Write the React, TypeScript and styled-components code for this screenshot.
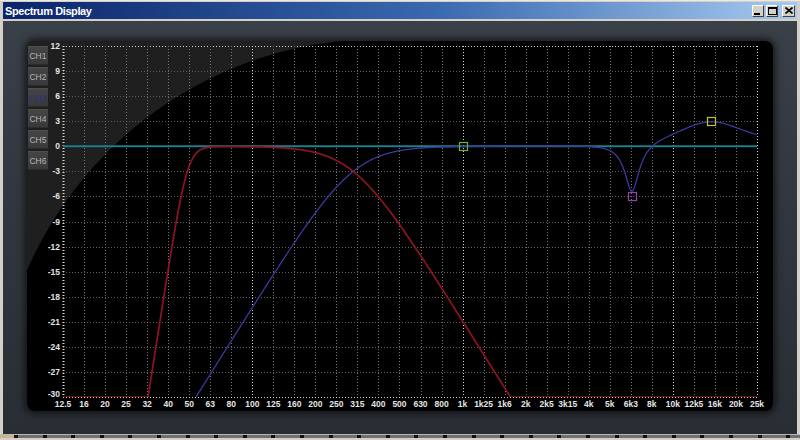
import React from 'react';
import styled, { createGlobalStyle } from 'styled-components';

const GlobalStyle = createGlobalStyle`
  html, body {
    margin: 0;
    padding: 0;
    background: #d4d0c8;
  }
  body {
    font-family: 'Liberation Sans', Arial, sans-serif;
  }
`;

// plot geometry, in page pixels (the svg viewBox uses page coordinates)
const LEFT = 63;
const RIGHT = 757;
const TOP = 45;
const BOTTOM = 396;
const PER_OCT = (RIGHT - LEFT) / 11;

const freqLabels = [
  '12.5', '16', '20', '25', '32', '40', '50', '63', '80', '100', '125', '160',
  '200', '250', '315', '400', '500', '630', '800', '1k', '1k25', '1k6', '2k',
  '2k5', '3k15', '4k', '5k', '6k3', '8k', '10k', '12k5', '16k', '20k', '25k',
];
const majorIdx = [0, 9, 19, 29, 33];
const dbLabels = [12, 9, 6, 3, 0, -3, -6, -9, -12, -15, -18, -21, -24, -27, -30];

const xOf = (i: number) => LEFT + (i * (RIGHT - LEFT)) / 33;
const yOf = (db: number) => TOP + ((12 - db) * (BOTTOM - TOP)) / 42;

const hp = (f: number, fc: number, n: number) =>
  -10 * Math.log10(1 + Math.pow(fc / f, 2 * n));
const lp = (f: number, fc: number, n: number) =>
  -10 * Math.log10(1 + Math.pow(f / fc, 2 * n));
const peak = (f: number, f0: number, gain: number, q: number) => {
  const A = Math.pow(10, gain / 40);
  const w = f / f0;
  const a = (1 - w * w) ** 2;
  return 10 * Math.log10((a + (w * A / q) ** 2) / (a + (w / (A * q)) ** 2));
};

const buildPath = (fn: (f: number) => number, clamp: boolean) => {
  const pts: string[] = [];
  for (let px = LEFT; px <= RIGHT; px += 0.5) {
    const f = 12.5 * Math.pow(2, (px - LEFT) / PER_OCT);
    const db = Math.max(fn(f), clamp ? -30 : -40);
    pts.push(`${px.toFixed(1)},${yOf(db).toFixed(2)}`);
  }
  return 'M' + pts.join(' L');
};

const redCurve = buildPath((f) => hp(f, 49, 8) + lp(f, 303, 2), true);
const blueCurve = buildPath(
  (f) => hp(f, 303, 2) + peak(f, 6485, -6, 5) + peak(f, 15400, 3, 1),
  false
);

const markers = [
  { x: 463, db: 0, color: '#74b236' },
  { x: 632, db: -6, color: '#9244b4' },
  { x: 711, db: 3, color: '#c8c22e' },
];

const channels = ['CH1', 'CH2', 'CH3', 'CH4', 'CH5', 'CH6'];

function CaptionIcon({ kind }: { kind: 'min' | 'max' | 'close' }) {
  if (kind === 'min')
    return (
      <svg width='8' height='8' viewBox='0 0 8 8'>
        <rect x='0' y='6' width='6' height='2' fill='#000' />
      </svg>
    );
  if (kind === 'max')
    return (
      <svg width='9' height='8' viewBox='0 0 9 8'>
        <rect x='0.5' y='0.5' width='8' height='7' fill='none' stroke='#000' />
        <rect x='0' y='0' width='9' height='2' fill='#000' />
      </svg>
    );
  return (
    <svg width='8' height='7' viewBox='0 0 8 7'>
      <path d='M0.5 0.5 L7.5 6.5 M7.5 0.5 L0.5 6.5' stroke='#000' strokeWidth='1.6' />
    </svg>
  );
}

function Chart() {
  return (
    <ChartSvg width={725} height={370} viewBox='48 40 725 370'>
      <defs>
        <clipPath id='plot'>
          <rect x={LEFT} y={TOP - 1} width={RIGHT - LEFT} height={BOTTOM - TOP + 1} />
        </clipPath>
      </defs>

      {/* horizontal grid */}
      {dbLabels.map((db, i) => {
        const y = Math.round(yOf(db)) + 0.5;
        const edge = i === 0 || i === dbLabels.length - 1;
        return (
          <line
            key={'h' + db}
            x1={LEFT}
            x2={RIGHT}
            y1={y}
            y2={y}
            stroke={edge ? '#cfcfcf' : '#5c5c5c'}
            strokeDasharray='1 2'
          />
        );
      })}

      {/* vertical grid */}
      {freqLabels.map((_, i) => {
        const x = Math.round(xOf(i)) + 0.5;
        const major = majorIdx.includes(i);
        return (
          <line
            key={'v' + i}
            x1={x}
            x2={x}
            y1={TOP}
            y2={BOTTOM}
            stroke={major ? '#d8d8d8' : '#767676'}
            strokeWidth={i === 0 ? 2 : 1}
            strokeDasharray='1 2'
          />
        );
      })}

      {/* 0 dB reference */}
      <line x1={LEFT} x2={RIGHT} y1={yOf(0)} y2={yOf(0)} stroke='#1f7c8c' strokeWidth={2} />

      <g clipPath='url(#plot)' fill='none'>
        <path d={blueCurve} stroke='#3a3a9c' strokeWidth={1.3} />
        <path d={redCurve} stroke='#8e1422' strokeWidth={1.7} />
      </g>

      <g fill='none' strokeWidth={1.2}>
        {markers.map((m) => (
          <rect
            key={m.x}
            x={m.x - 3.5}
            y={Math.round(yOf(m.db)) - 3.5}
            width={8}
            height={8}
            stroke={m.color}
          />
        ))}
      </g>

      {dbLabels.map((db, i) => (
        <AxisText
          key={'l' + db}
          x={60}
          y={i === dbLabels.length - 1 ? 396 : yOf(db) + 3}
          textAnchor='end'
        >
          {db}
        </AxisText>
      ))}
      {freqLabels.map((label, i) => (
        <AxisText key={'f' + label} x={xOf(i)} y={406} textAnchor='middle'>
          {label}
        </AxisText>
      ))}
    </ChartSvg>
  );
}

export default function App() {
  return (
    <>
      <GlobalStyle />
      <Window>
        <TitleBar>
          <Title>Spectrum Display</Title>
          <Captions>
            <CaptionButton>
              <CaptionIcon kind='min' />
            </CaptionButton>
            <CaptionButton>
              <CaptionIcon kind='max' />
            </CaptionButton>
            <CaptionButton $wide>
              <CaptionIcon kind='close' />
            </CaptionButton>
          </Captions>
        </TitleBar>
        <Client>
          <Panel>
            <ChannelList>
              {channels.map((c) => (
                <ChannelButton key={c} $active={c === 'CH3'}>
                  {c}
                </ChannelButton>
              ))}
            </ChannelList>
            <Chart />
          </Panel>
        </Client>
        <StatusStrip>
          <Grip />
          <Ticks />
        </StatusStrip>
      </Window>
    </>
  );
}

const Window = styled.div`
  width: 800px;
  height: 440px;
  box-sizing: border-box;
  padding: 1px 3px 0 3px;
  display: flex;
  flex-direction: column;
  background: #d4d0c8;
  border-top: 1px solid #ece9e2;
  overflow: hidden;
`;

const TitleBar = styled.div`
  height: 17px;
  display: flex;
  align-items: center;
  justify-content: space-between;
  padding: 0 2px 0 2px;
  background: linear-gradient(to right, #0a246a 0%, #3a6ab0 55%, #a6caf0 100%);
`;

const Title = styled.span`
  color: #fff;
  font-weight: bold;
  font-size: 11px;
  letter-spacing: -0.4px;
`;

const Captions = styled.div`
  display: flex;
  align-items: center;
  gap: 2px;
`;

const CaptionButton = styled.div<{ $wide?: boolean }>`
  width: ${(p) => (p.$wide ? '13px' : '12px')};
  height: 12px;
  margin-left: ${(p) => (p.$wide ? '2px' : '0')};
  box-sizing: border-box;
  display: flex;
  align-items: center;
  justify-content: center;
  background: #d4d0c8;
  border-top: 1px solid #fff;
  border-left: 1px solid #fff;
  border-right: 1px solid #404040;
  border-bottom: 1px solid #404040;
`;

const Client = styled.div`
  margin-top: 2px;
  height: 413px;
  box-sizing: border-box;
  padding-top: 20px;
  background: linear-gradient(180deg, #394048 0%, #31373f 45%, #292e35 100%);
`;

// the grey gloss only covers the top-left quadrant of a large circle
const Panel = styled.div`
  width: 746px;
  height: 370px;
  margin: 0 auto;
  display: flex;
  align-items: flex-start;
  border-radius: 8px;
  overflow: hidden;
  background:
    radial-gradient(circle 385px at 353px 383px, #000 384.5px, #1f1f1f 385.5px)
      0 0 / 353px 383px no-repeat,
    #000;
  box-shadow: 0 0 6px 3px rgba(0, 0, 0, 0.55);
`;

const ChannelList = styled.div`
  width: 21px;
  padding: 5px 0 0 1px;
  box-sizing: border-box;
  display: flex;
  flex-direction: column;
  gap: 2px;
`;

const ChannelButton = styled.div<{ $active?: boolean }>`
  height: 19px;
  width: 20px;
  box-sizing: border-box;
  display: flex;
  align-items: center;
  justify-content: center;
  font-size: 8.5px;
  color: ${(p) => (p.$active ? '#2c2c96' : '#b4b4b4')};
  background: linear-gradient(180deg, #454545 0%, #393939 100%);
  border-top: 1px solid #4e4e4e;
  border-bottom: 1px solid #2c2c2c;
`;

const ChartSvg = styled.svg`
  display: block;
  flex: none;
`;

const AxisText = styled.text`
  font-family: 'Liberation Sans', Arial, sans-serif;
  font-size: 8.5px;
  font-weight: bold;
  fill: #e4e4e4;
`;

const StatusStrip = styled.div`
  height: 6px;
  margin: 0 -3px;
  display: flex;
  flex-direction: column;
  position: relative;
  background: #d4d0c8;
`;

const Ticks = styled.div`
  height: 3px;
  background: repeating-linear-gradient(
    90deg,
    #707070 0px,
    #707070 10px,
    #111 10px,
    #111 14px,
    #707070 14px,
    #707070 28.6px
  );
  background-position: 4px 0;
  border-top: 1px solid #b8b8b8;
`;

const Grip = styled.div`
  position: absolute;
  left: 0;
  top: 1px;
  width: 14px;
  height: 3px;
  background: #c8b68c;
`;
